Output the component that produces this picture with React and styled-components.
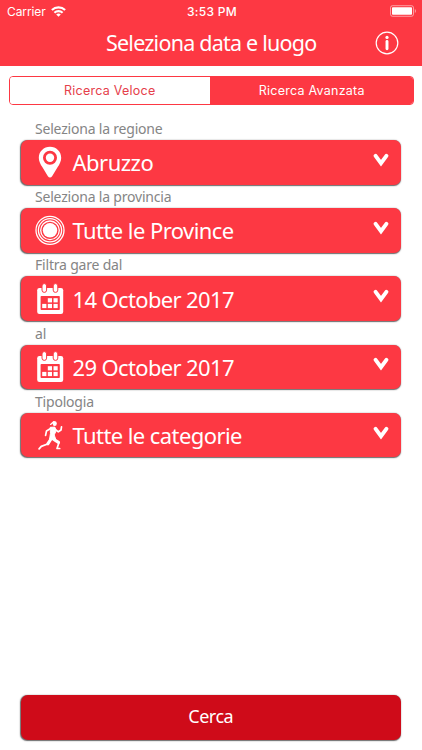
import React from "react";
import styled, { createGlobalStyle } from "styled-components";

const GlobalStyle = createGlobalStyle`
  * {
    box-sizing: border-box;
  }

  body {
    margin: 0;
    background: #fff;
    font-family: "Noto Sans", "Open Sans", sans-serif;
  }
`;

const Screen = styled.div`
  display: flex;
  flex-direction: column;
  width: 422px;
  height: 750px;
  overflow: hidden;
`;

const Header = styled.header`
  flex: none;
  height: 65.5px;
  color: #fff;
  background: #fd3843;
`;

const StatusBar = styled.div`
  display: grid;
  grid-template-columns: 1fr auto 1fr;
  align-items: center;
  height: 22px;
  padding: 0 5px 0 7px;
  font-family: Inter, sans-serif;
  font-size: 12px;
`;

const Carrier = styled.div`
  display: flex;
  align-items: center;
  gap: 5px;
  letter-spacing: -0.1px;
`;

const Clock = styled.div`
  font-weight: 500;
  letter-spacing: 0.3px;
`;

const BatteryIcon = styled.svg`
  justify-self: end;
`;

const NavBar = styled.div`
  display: grid;
  grid-template-columns: 48px 1fr 47.5px;
  align-items: center;
  height: 41px;
`;

const Title = styled.h1`
  margin: 0;
  font-size: 21.5px;
  font-weight: 400;
  line-height: 40px;
  letter-spacing: -0.77px;
  text-align: center;
  white-space: nowrap;
`;

const Segments = styled.div`
  display: flex;
  flex: none;
  height: 29px;
  margin: 10px 8.5px 0;
  overflow: hidden;
  border: 1px solid #fd3843;
  border-radius: 4px;
`;

const Segment = styled.button`
  flex: ${({ $active }) => ($active ? "1 1 0" : "0 0 200.5px")};
  padding: ${({ $active }) => ($active ? "0 0 0 1px" : "0")};
  border: 0;
  font-family: Inter, sans-serif;
  font-size: 12.5px;
  letter-spacing: 0.25px;
  color: ${({ $active }) => ($active ? "#fff" : "#e5404b")};
  background: ${({ $active }) => ($active ? "#fd3843" : "#fff")};
`;

const Form = styled.main`
  display: flex;
  flex: 1;
  flex-direction: column;
  padding: 14.5px 21px 10px 20.5px;
`;

const Label = styled.label`
  height: 21px;
  padding-left: 14.5px;
  font-size: 14px;
  line-height: 20px;
  letter-spacing: -0.2px;
  color: #858585;
`;

const Select = styled.button`
  display: flex;
  flex: none;
  align-items: center;
  height: 44.5px;
  margin-bottom: 2.7px;
  padding: 0 12px 0 14px;
  border: 0;
  border-radius: 7px;
  color: #fff;
  background: #fd3843;
  box-shadow: -0.5px 0.8px 1.2px rgba(0, 0, 0, 0.6);
`;

const Value = styled.span`
  flex: 1;
  margin-left: 8px;
  font-family: "Noto Sans", "Open Sans", sans-serif;
  font-size: 22px;
  line-height: 44px;
  letter-spacing: ${({ $spacing }) => $spacing};
  text-align: left;
  white-space: nowrap;
`;

const Chevron = styled.svg`
  margin-bottom: 5px;
`;

const SearchButton = styled.button`
  flex: none;
  height: 45px;
  margin-top: auto;
  padding: 0 0 3px;
  border: 0;
  border-radius: 7px;
  font-family: "Noto Sans", "Open Sans", sans-serif;
  font-size: 18px;
  letter-spacing: -0.5px;
  color: #fff;
  background: #cf0b19;
  box-shadow: -0.5px 0.8px 1.2px rgba(0, 0, 0, 0.6);
`;

const WifiIcon = () => (
  <svg width="15" height="11" viewBox="0 0 15 11" fill="none" stroke="#fff" strokeWidth="2.1">
    <path d="M.9 4.1a9.3 9.3 0 0 1 13.2 0" />
    <path d="M3.4 6.8a5.8 5.8 0 0 1 8.2 0" />
    <path d="M7.5 10.8 5.2 8.5a3.3 3.3 0 0 1 4.6 0z" fill="#fff" stroke="none" />
  </svg>
);

const Battery = () => (
  <BatteryIcon width="27" height="12" viewBox="0 0 27 12">
    <rect x=".5" y=".7" width="23" height="10.6" rx="2" fill="none" stroke="#fff" strokeOpacity=".5" />
    <rect x="2" y="2.2" width="20" height="7.6" rx=".8" fill="#fff" />
    <path d="M24.8 4v4c1.6-.6 1.6-3.4 0-4z" fill="#fff" fillOpacity=".5" />
  </BatteryIcon>
);

const InfoIcon = () => (
  <svg width="24" height="24" viewBox="0 0 24 24" fill="none" stroke="#fff">
    <circle cx="12" cy="12" r="10.8" strokeWidth="1.2" />
    <circle cx="12" cy="6.4" r="1.6" fill="#fff" stroke="none" />
    <path d="M12 10.4v7.4" strokeWidth="2.9" strokeLinecap="round" />
  </svg>
);

const PinIcon = () => (
  <svg width="30" height="32" viewBox="0 0 30 32">
    <path
      fill="#fff"
      fillRule="evenodd"
      d="M15 .8C8.8.8 3.8 5.6 3.8 11.7c0 3.3 1.6 6.4 3.5 9.4l5.6 9.1c1.1 1.6 3.1 1.6 4.2 0l5.6-9.1c1.9-3 3.5-6.1 3.5-9.4C26.2 5.6 21.2.8 15 .8zM15 4.8a7 7 0 1 1 0 14a7 7 0 0 1 0-14z"
    />
    <circle cx="15" cy="11.8" r="4.2" fill="#fff" />
  </svg>
);

const TargetIcon = () => (
  <svg width="30" height="30" viewBox="0 0 30 30" fill="none" stroke="#fff" strokeWidth="1.3">
    <circle cx="15" cy="15.3" r="14" />
    <circle cx="15" cy="15.3" r="11.6" />
    <circle cx="15" cy="15.3" r="9.3" />
    <circle cx="15" cy="15.3" r="7.2" fill="#fff" stroke="none" />
  </svg>
);

const CalendarIcon = () => (
  <svg width="30" height="32" viewBox="0 0 30 32">
    <rect x="2.2" y="5" width="26" height="26" rx="2.2" fill="#fff" />
    <g fill="#fff" stroke="#fd3843" strokeWidth="1">
      <rect x="7" y=".6" width="4.6" height="8.8" rx="2.3" />
      <rect x="18.2" y=".6" width="4.6" height="8.8" rx="2.3" />
    </g>
    <rect x="5.6" y="13" width="19.2" height="14" rx=".8" fill="#fd3843" />
    <g fill="#fff">
      <rect x="12.8" y="15.2" width="4.2" height="4.2" />
      <rect x="18.5" y="15.2" width="4.2" height="4.2" />
      <rect x="7.2" y="20.9" width="4.2" height="4.2" />
      <rect x="12.8" y="20.9" width="4.2" height="4.2" />
      <rect x="18.5" y="20.9" width="4.2" height="4.2" />
    </g>
  </svg>
);

const RunnerIcon = () => (
  <svg
    width="30"
    height="32"
    viewBox="0 0 30 32"
    fill="none"
    stroke="#fff"
    strokeLinecap="round"
    strokeLinejoin="round"
  >
    {/* head and ponytail */}
    <ellipse cx="19.7" cy="4.4" rx="2.1" ry="2.5" fill="#fff" stroke="none" />
    <path d="M18.6 2.8l-3 2.600" strokeWidth="1.3" />
    {/* body */}
    <path d="M15.6 8.300l4.300-.2 1.100 4.100-1.800 3.700 1.600 4.600-6.200-.4.800-5.300z" fill="#fff" strokeWidth="1" />
    {/* arms */}
    <path d="M19.800 10l3.500 2.800 2.700-1.800.5-3.200" strokeWidth="1.7" />
    <path d="M16 9.200l-4.500 2.700-.9 4.400" strokeWidth="1.7" />
    {/* legs */}
    <path d="M18.500 20.300l5 3.100" strokeWidth="3.100" />
    <path d="M24 23.600l-2 5.900h2.700" strokeWidth="1.700" />
    <path d="M16 20l-3.200 4.800" strokeWidth="3.100" />
    <path d="M12.600 25l-6.300 2.300-2.200 2.500" strokeWidth="1.800" />
  </svg>
);

const ChevronIcon = () => (
  <Chevron width="16" height="14" viewBox="0 0 16 14">
    <path
      d="M2.600 2.800 8 10.200l5.400-7.400"
      fill="none"
      stroke="#fff"
      strokeWidth="3.9"
      strokeLinecap="round"
    />
  </Chevron>
);

const fields = [
  { label: "Seleziona la regione", value: "Abruzzo", Icon: PinIcon, spacing: "-0.5px" },
  { label: "Seleziona la provincia", value: "Tutte le Province", Icon: TargetIcon, spacing: "-0.57px" },
  { label: "Filtra gare dal", value: "14 October 2017", Icon: CalendarIcon, spacing: "-0.64px" },
  { label: "al", value: "29 October 2017", Icon: CalendarIcon, spacing: "-0.64px" },
  { label: "Tipologia", value: "Tutte le categorie", Icon: RunnerIcon, spacing: "-0.58px" },
];

const App = () => {
  return (
    <Screen>
      <GlobalStyle />
      <Header>
        <StatusBar>
          <Carrier>
            Carrier <WifiIcon />
          </Carrier>
          <Clock>3:53 PM</Clock>
          <Battery />
        </StatusBar>
        <NavBar>
          <span />
          <Title>Seleziona data e luogo</Title>
          <InfoIcon />
        </NavBar>
      </Header>
      <Segments>
        <Segment>Ricerca Veloce</Segment>
        <Segment $active>Ricerca Avanzata</Segment>
      </Segments>
      <Form>
        {fields.map(({ label, value, Icon, spacing }) => (
          <React.Fragment key={label}>
            <Label>{label}</Label>
            <Select>
              <Icon />
              <Value $spacing={spacing}>{value}</Value>
              <ChevronIcon />
            </Select>
          </React.Fragment>
        ))}
        <SearchButton>Cerca</SearchButton>
      </Form>
    </Screen>
  );
};

export default App;
